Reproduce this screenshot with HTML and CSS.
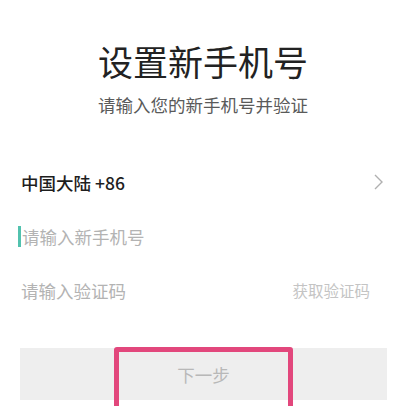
FILE: index.html
```html
<!DOCTYPE html>
<html lang="zh-CN">
<head>
<meta charset="utf-8">
<link rel="stylesheet" href="styles.css">
</head>
<body>
<div class="page">
  <header class="head">
    <h1 class="title">设置新手机号</h1>
    <p class="sub">请输入您的新手机号并验证</p>
  </header>
  <div class="form">
    <div class="row">
      <span class="region">中国大陆 +86</span>
      <svg class="chev" width="9" height="16" viewBox="0 0 9 16"><path d="M1 1 L8 8 L1 15" fill="none" stroke="#b0b0b0" stroke-width="1.4"/></svg>
    </div>
    <div class="row row-input">
      <span class="cursor"></span><span class="ph">请输入新手机号</span>
    </div>
    <div class="row">
      <span class="ph">请输入验证码</span>
      <span class="get">获取验证码</span>
    </div>
  </div>
  <div class="btn">
    <span class="btn-text">下一步</span>
    <span class="mark"></span>
  </div>
</div>
</body>
</html>
```

FILE: styles.css
```css
html, body {
  margin: 0;
  padding: 0;
  background: #ffffff;
  overflow: hidden;
}
.page {
  width: 400px;
  height: 406px;
  font-family: "Noto Sans CJK SC", "Noto Sans", sans-serif;
  overflow: hidden;
}
.head {
  padding-top: 43px;
  padding-left: 6px;
  text-align: center;
}
.title {
  margin: 0;
  font-size: 35px;
  line-height: 35px;
  font-weight: 400;
  color: #222222;
}
.sub {
  margin: 18px 0 0;
  font-size: 17.5px;
  line-height: 18px;
  color: #5a5a5a;
}
.form {
  margin-top: 41px;
  padding: 0 17px 0 21px;
}
.row {
  height: 54px;
  display: flex;
  align-items: center;
  justify-content: space-between;
  font-size: 17.5px;
}
.region {
  color: #1e1e1e;
  font-weight: 500;
}
.chev {
  display: block;
}
.row-input {
  justify-content: flex-start;
  margin-left: -3px;
}
.cursor {
  width: 3px;
  height: 21px;
  background: #52c2ae;
  margin-right: 1px;
}
.ph {
  color: #b3b3b3;
}
.get {
  font-size: 15.5px;
  color: #c4c4c4;
  margin-right: 13px;
}
.btn {
  position: relative;
  margin: 31px 13px 0 20px;
  height: 52px;
  background: #eeeeee;
  display: flex;
  align-items: center;
  justify-content: center;
}
.btn-text {
  font-size: 17.5px;
  color: #b8b8b8;
}
.mark {
  position: absolute;
  left: 94px;
  top: -1px;
  width: 169px;
  height: 70px;
  border: 5px solid #e2477c;
  border-radius: 3px;
}
```
